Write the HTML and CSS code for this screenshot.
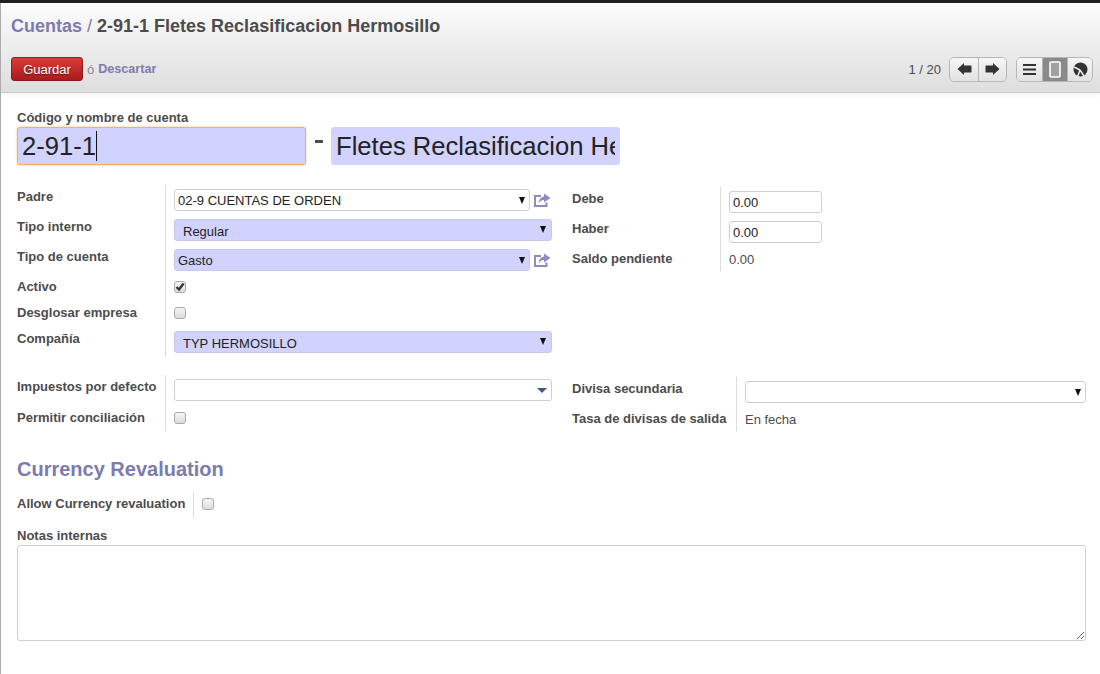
FILE: index.html
```html
<!DOCTYPE html>
<html>
  <head>
    <title>Cuentas</title>
    <meta charset="UTF-8">
    <meta name="viewport" content="width=device-width, initial-scale=1.0">
    <link rel="stylesheet" href="styles.css">
  </head>
  <body>
    <div class="topbar"></div>
    <div class="page">
      <header class="header">
        <h1 class="title"><a href="#">Cuentas</a> <span class="slash">/</span> 2-91-1 Fletes Reclasificacion Hermosillo</h1>
        <div class="toolbar">
          <div class="actions">
            <button class="save">Guardar</button>
            <span class="or">ó</span>
            <a class="discard" href="#">Descartar</a>
          </div>
          <div class="pager">
            <span class="count">1 / 20</span>
            <div class="btn-group">
              <button class="tool">
                <svg width="15" height="12" viewBox="0 0 15 12"><path d="M0.500 6 L7 0 V2.500 H14 Q14.500 2.500 14.500 3 V9 Q14.500 9.500 14 9.500 H7 V12 Z" fill="#333"/></svg>
              </button>
              <button class="tool">
                <svg width="15" height="12" viewBox="0 0 15 12"><path d="M14.500 6 L8 0 V2.500 H1 Q0.500 2.500 0.500 3 V9 Q0.500 9.500 1 9.500 H8 V12 Z" fill="#333"/></svg>
              </button>
            </div>
            <div class="btn-group views">
              <button class="tool">
                <svg width="13" height="11" viewBox="0 0 13 11"><path d="M0 1 H13 M0 5.500 H13 M0 10 H13" stroke="#333" stroke-width="2"/></svg>
              </button>
              <button class="tool active">
                <svg width="12" height="17" viewBox="0 0 12 17"><rect x="1" y="1" width="10" height="15" rx="1" fill="#a2a2a2" stroke="#fff" stroke-width="1.600"/></svg>
              </button>
              <button class="tool">
                <svg width="15" height="15" viewBox="0 0 15 15"><circle cx="7.500" cy="7.500" r="7" fill="#333"/><path d="M7 8 L1 5 M7 8 L4.500 15 M7 8 L11 14" stroke="#eee" stroke-width="1.500" fill="none"/></svg>
              </button>
            </div>
          </div>
        </div>
      </header>

      <main class="sheet">
        <label class="name-label">Código y nombre de cuenta</label>
        <div class="name-row">
          <div class="code-wrap">
            <input class="big req focus" type="text" value="2-91-1">
            <span class="caret"></span>
          </div>
          <span class="dash"></span>
          <input class="big req" type="text" value="Fletes Reclasificacion Hermosillo">
        </div>

        <div class="group first">
          <div class="fields">
            <div class="lbl r30">Padre</div>
            <div class="val r30">
              <div class="m2o">
                <div class="combo"><input type="text" value="02-9 CUENTAS DE ORDEN"><span class="arrow"></span></div>
                <svg class="share" width="17" height="14" viewBox="0 0 17 14"><path d="M10 0.500 L16.500 5 L10 9.500 V7 C7.500 7 6 8 4.500 10.500 C5 6.500 7 3.800 10 3.500 Z" fill="#8d8cbd"/><path d="M7 3 H1 V13 H12.500 V9.500" fill="none" stroke="#8d8cbd" stroke-width="2"/></svg>
              </div>
            </div>
            <div class="lbl r30">Tipo interno</div>
            <div class="val r30"><div class="sel req"><span>Regular</span><span class="arrow"></span></div></div>
            <div class="lbl r30">Tipo de cuenta</div>
            <div class="val r30">
              <div class="m2o">
                <div class="combo req"><input type="text" value="Gasto"><span class="arrow"></span></div>
                <svg class="share" width="17" height="14" viewBox="0 0 17 14"><path d="M10 0.500 L16.500 5 L10 9.500 V7 C7.500 7 6 8 4.500 10.500 C5 6.500 7 3.800 10 3.500 Z" fill="#8d8cbd"/><path d="M7 3 H1 V13 H12.500 V9.500" fill="none" stroke="#8d8cbd" stroke-width="2"/></svg>
              </div>
            </div>
            <div class="lbl r26">Activo</div>
            <div class="val r26"><span class="check"><svg width="10" height="10" viewBox="0 0 10 10"><path d="M1.500 5 L4 7.500 L8.500 1.500" fill="none" stroke="#333" stroke-width="2.400"/></svg></span></div>
            <div class="lbl r26">Desglosar empresa</div>
            <div class="val r26"><span class="check"></span></div>
            <div class="lbl r30">Compañía</div>
            <div class="val r30"><div class="sel req"><span>TYP HERMOSILLO</span><span class="arrow"></span></div></div>
          </div>
          <div class="fields side">
            <div class="lbl r30">Debe</div>
            <div class="val r30"><input class="num" type="text" value="0.00"></div>
            <div class="lbl r30">Haber</div>
            <div class="val r30"><input class="num" type="text" value="0.00"></div>
            <div class="lbl r24">Saldo pendiente</div>
            <div class="val r24 text">0.00</div>
          </div>
        </div>

        <div class="group second">
          <div class="fields">
            <div class="lbl r31">Impuestos por defecto</div>
            <div class="val r31"><div class="combo tags"><input type="text"><span class="arrow blue"></span></div></div>
            <div class="lbl r25">Permitir conciliación</div>
            <div class="val r25"><span class="check"></span></div>
          </div>
          <div class="fields side wide">
            <div class="lbl r30">Divisa secundaria</div>
            <div class="val r30"><div class="combo"><input type="text"><span class="arrow"></span></div></div>
            <div class="lbl r24">Tasa de divisas de salida</div>
            <div class="val r24 text">En fecha</div>
          </div>
        </div>

        <h2 class="section">Currency Revaluation</h2>
        <div class="fields allow">
          <div class="lbl r26">Allow Currency revaluation</div>
          <div class="val r26"><span class="check"></span></div>
        </div>

        <label class="notes-label">Notas internas</label>
        <textarea class="notes"></textarea>
      </main>
    </div>
  </body>
</html>
```

FILE: styles.css
```css
* {
  box-sizing: border-box;
}
html, body {
  height: 100%;
}
body {
  margin: 0;
  font-family: "Liberation Sans", Arial, sans-serif;
  font-size: 13px;
  color: #4c4c4c;
  background: #fff;
  overflow: hidden;
}
a {
  color: #7c7bad;
  text-decoration: none;
}
.topbar {
  height: 3px;
  background: #222;
}
.page {
  height: 671px;
  border-left: 1px solid #b0b0b0;
}

/* header */
.header {
  height: 90px;
  padding: 0 7px 0 10px;
  background: linear-gradient(#fcfcfc, #dedede);
  border-bottom: 1px solid #cacaca;
  box-shadow: 0 2px 5px rgba(0, 0, 0, 0.05);
}
.title {
  margin: 0;
  padding-top: 13px;
  height: 53px;
  font-size: 18px;
  line-height: 20px;
  font-weight: bold;
  color: #4c4c4c;
}
.slash {
  font-weight: normal;
  color: #7c7bad;
}
.toolbar {
  display: flex;
  justify-content: space-between;
  align-items: center;
  height: 26px;
}
.actions {
  display: flex;
  align-items: center;
}
.save {
  width: 72px;
  height: 24px;
  padding: 0;
  border: 1px solid #8a1e1e;
  border-radius: 3px;
  background: linear-gradient(#dc3a3a, #a81c1c);
  color: #fff;
  font: 13px "Liberation Sans", Arial, sans-serif;
  text-shadow: 0 1px 1px rgba(0, 0, 0, 0.5);
}
.or {
  margin: 0 4px;
  color: #888;
}
.discard {
  font-weight: bold;
  font-size: 12.600px;
}
.pager {
  display: flex;
  align-items: center;
}
.count {
  margin-right: 8px;
}
.btn-group {
  display: flex;
  height: 25px;
  border: 1px solid #b5b5b5;
  border-radius: 5px;
  overflow: hidden;
}
.views {
  margin-left: 9px;
}
.tool {
  display: flex;
  align-items: center;
  justify-content: center;
  width: 28px;
  height: 23px;
  padding: 0;
  border: none;
  border-left: 1px solid #b5b5b5;
  background: linear-gradient(#f6f6f6, #e2e2e2);
}
.tool:first-child {
  border-left: none;
}
.views .tool {
  width: 25px;
}
.tool.active {
  background: #8a8a8a;
}

/* form sheet */
.sheet {
  padding: 17px 13px 0 16px;
}
.name-label, .notes-label {
  display: block;
  font-weight: bold;
  font-size: 13px;
  line-height: 16px;
}
.name-label {
  height: 17px;
}
.name-row {
  display: flex;
  align-items: center;
  height: 38px;
}
.req {
  background-color: #d2d2ff;
}
.big {
  width: 289px;
  height: 38px;
  padding: 0 4px;
  border: 1px solid #d2d2ff;
  border-radius: 3px;
  font: 25.600px "Liberation Sans", Arial, sans-serif;
  color: #222;
  outline: none;
}
.code-wrap {
  position: relative;
}
.big.focus {
  border: 1px solid #ecb55f;
  box-shadow: 0 0 2px #ecb55f;
}
.caret {
  position: absolute;
  left: 79px;
  top: 4px;
  width: 1px;
  height: 30px;
  background: #111;
}
.dash {
  width: 8px;
  height: 3px;
  margin: 0 8px 9px 9px;
  background: #4c4c4c;
}

.group {
  display: grid;
  grid-template-columns: 555px 1fr;
  align-items: start;
}
.first {
  margin-top: 20px;
}
.second {
  margin-top: 18px;
}
.fields {
  display: grid;
  grid-template-columns: 149px 1fr;
  width: 535px;
}
.side {
  width: 250px;
  margin-top: 2px;
}
.wide {
  width: 514px;
  grid-template-columns: 165px 1fr;
}
.lbl {
  padding-top: 5px;
  line-height: 14px;
  font-size: 13px;
  font-weight: bold;
  border-right: 1px solid #dcdcdc;
  white-space: nowrap;
}
.val {
  padding: 4px 0 0 8px;
}
.val.text {
  padding-top: 5px;
  line-height: 15px;
}
.r24 { height: 24px; }
.r25 { height: 25px; }
.r26 { height: 26px; }
.r30 { height: 30px; }
.r31 { height: 31px; }

input {
  font-family: "Liberation Sans", Arial, sans-serif;
}
.m2o {
  display: flex;
  align-items: center;
  gap: 4px;
}
.combo, .sel {
  position: relative;
  display: flex;
  align-items: center;
  height: 22px;
  border: 1px solid #cfcfcf;
  border-radius: 3px;
  flex: 1;
  color: #222;
}
.m2o .combo {
  width: 356px;
  flex: none;
}
.combo.req, .sel.req {
  border-color: #c8c8ee;
}
.combo input {
  width: 100%;
  height: 20px;
  padding: 0 3px;
  border: none;
  background: transparent;
  font-size: 13px;
  color: #222;
  outline: none;
}
.sel {
  padding: 3px 0 0 8px;
  line-height: 18px;
}
.arrow {
  position: absolute;
  right: 4px;
  top: 7px;
  width: 0;
  height: 0;
  border-left: 3.500px solid transparent;
  border-right: 3.500px solid transparent;
  border-top: 7px solid #111;
}
.sel .arrow {
  right: 5px;
  top: 6px;
}
.arrow.blue {
  right: 4px;
  top: 8px;
  border-left-width: 5px;
  border-right-width: 5px;
  border-top: 5px solid #3a5a96;
}
.share {
  flex: none;
}
.num {
  display: block;
  width: 93px;
  height: 22px;
  padding: 0 3px;
  border: 1px solid #cfcfcf;
  border-radius: 3px;
  font-size: 13px;
  color: #222;
  outline: none;
}
.check {
  display: flex;
  align-items: center;
  justify-content: center;
  width: 12px;
  height: 12px;
  margin-top: 2px;
  border: 1px solid #aaa;
  border-radius: 3px;
  background: linear-gradient(#f6f6f6, #dcdcdc);
}
.section {
  margin: 25px 0 0;
  height: 36px;
  font-size: 20px;
  line-height: 26px;
  font-weight: bold;
  color: #7c7bad;
}
.allow {
  grid-template-columns: 177px 1fr;
}
.notes-label {
  margin-top: 10px;
  height: 17px;
}
.notes {
  display: block;
  width: 1069px;
  height: 96px;
  border: 1px solid #cfcfcf;
  border-radius: 3px;
  outline: none;
}
```
